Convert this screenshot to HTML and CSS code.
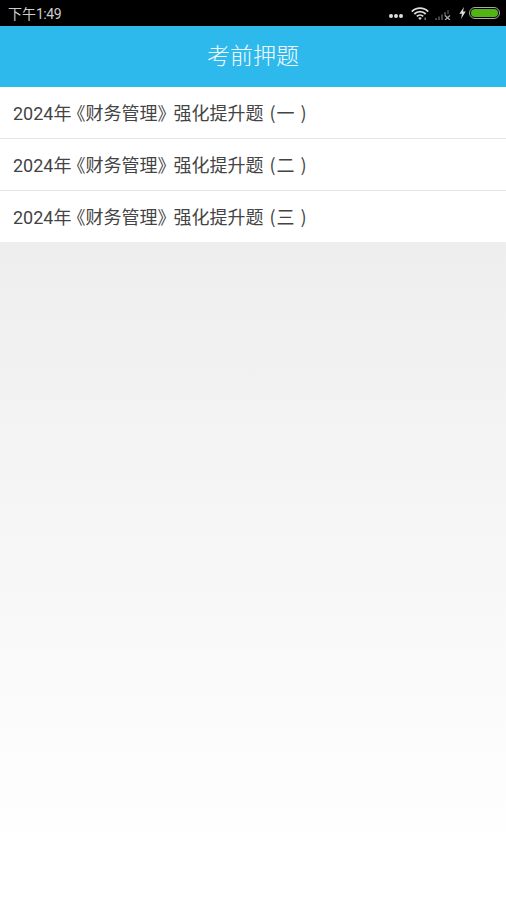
FILE: index.html
```html
<!DOCTYPE html>
<html lang="zh-CN">
<head>
	<meta charset="UTF-8">
	<title>考前押题</title>
	<link rel="stylesheet" href="styles.css">
</head>
<body>
	<section class="warp">
		<div class="statusBar">
			<span class="time">下午<span class="clock">1:49</span></span>
			<div class="statusIcons">
				<span class="dots"><i></i><i></i><i></i></span>
				<svg class="wifi" width="18" height="13" viewBox="0 0 18 13">
					<path d="M0.8 4.6 A11.6 11.6 0 0 1 17.2 4.6" fill="none" stroke="#ddd" stroke-width="1.8"/>
					<path d="M3.3 7 A8 8 0 0 1 14.7 7" fill="none" stroke="#ddd" stroke-width="1.8"/>
					<path d="M5.8 9.4 A4.6 4.6 0 0 1 12.2 9.4" fill="none" stroke="#ddd" stroke-width="1.8"/>
					<path d="M9 13 L7.2 11 A2.6 2.6 0 0 1 10.8 11 Z" fill="#ddd"/>
					<rect x="13.5" y="10.5" width="1.5" height="2.5" fill="#777"/>
				</svg>
				<svg class="signal" width="16" height="10" viewBox="0 0 16 10">
					<rect x="0" y="8" width="2" height="2" fill="#444"/>
					<rect x="3" y="6.5" width="2" height="3.5" fill="#444"/>
					<rect x="6" y="4.5" width="2" height="5.5" fill="#444"/>
					<rect x="9" y="2" width="2" height="3.5" fill="#444"/>
					<rect x="12" y="0" width="2" height="4" fill="#333"/>
					<path d="M10 5.5 L15 10 M15 5.5 L10 10" stroke="#aaa" stroke-width="1.3"/>
				</svg>
				<svg class="bolt" width="7" height="12" viewBox="0 0 7 12">
					<path d="M5 0 L0.3 6.8 H3 L2 12 L6.7 4.6 H4 Z" fill="#ddd"/>
				</svg>
				<span class="battery"><i></i></span>
			</div>
		</div>
		<header class="header">考前押题</header>
		<ul class="list">
			<li>2024年<span class="bookL">《</span>财务管理<span class="bookR">》</span>强化提升题<span class="parenL">(</span>一<span class="parenR">)</span></li>
			<li>2024年<span class="bookL">《</span>财务管理<span class="bookR">》</span>强化提升题<span class="parenL">(</span>二<span class="parenR">)</span></li>
			<li>2024年<span class="bookL">《</span>财务管理<span class="bookR">》</span>强化提升题<span class="parenL">(</span>三<span class="parenR">)</span></li>
		</ul>
	</section>
</body>
</html>
```

FILE: styles.css
```css
html,body{
	margin:0;
	height:100%;
}
body{
	font-family:"Roboto","Noto Sans CJK SC",sans-serif;
}
ul,li{
	margin:0;
	padding:0;
	list-style:none;
}
.warp{
	display:flex;
	flex-direction:column;
	height:900px;
	background:linear-gradient(#eeeeee 243px,#ffffff 860px);
}
.statusBar{
	display:flex;
	align-items:center;
	justify-content:space-between;
	height:26px;
	padding:0 6px 0 8px;
	background-color:#000;
	box-sizing:border-box;
}
.time{
	font-size:14px;
	color:#ccc;
}
.clock{
	letter-spacing:-0.5px;
}
.statusIcons{
	display:flex;
	align-items:center;
}
.dots{
	display:flex;
	gap:1px;
	margin:6px 8px 0 0;
}
.dots i{
	width:4px;
	height:4px;
	border-radius:50%;
	background-color:#ddd;
}
.signal{
	margin:4px 8px 0 6px;
}
.bolt{
	margin-right:3px;
}
.battery{
	display:block;
	width:31px;
	height:12px;
	padding:1px;
	box-sizing:border-box;
	border:1.5px solid #aaa;
	border-radius:6px;
}
.battery i{
	display:block;
	height:100%;
	background-color:#52b516;
	border-radius:4px;
}
.header{
	height:61px;
	line-height:61px;
	text-align:center;
	font-size:23px;
	font-weight:300;
	color:#f4fbfe;
	background-color:#2db9eb;
}
.list{
	background-color:#fff;
}
.list li{
	height:52px;
	line-height:54px;
	padding-left:13px;
	font-size:18px;
	color:#444;
	box-sizing:border-box;
	border-top:1px solid #e6e6e6;
}
.list li:first-child{
	border-top:0;
	height:51px;
}
.bookL{
	font-feature-settings:"halt";
	margin:0 0 0 5px;
}
.bookR{
	font-feature-settings:"halt";
	margin:0 7px 0 0;
}
.parenL,.parenR{
	font-family:"Noto Sans CJK SC",sans-serif;
	line-height:1;
}
.parenL{
	margin:0 1px 0 6px;
}
.parenR{
	margin-left:6px;
}
```
